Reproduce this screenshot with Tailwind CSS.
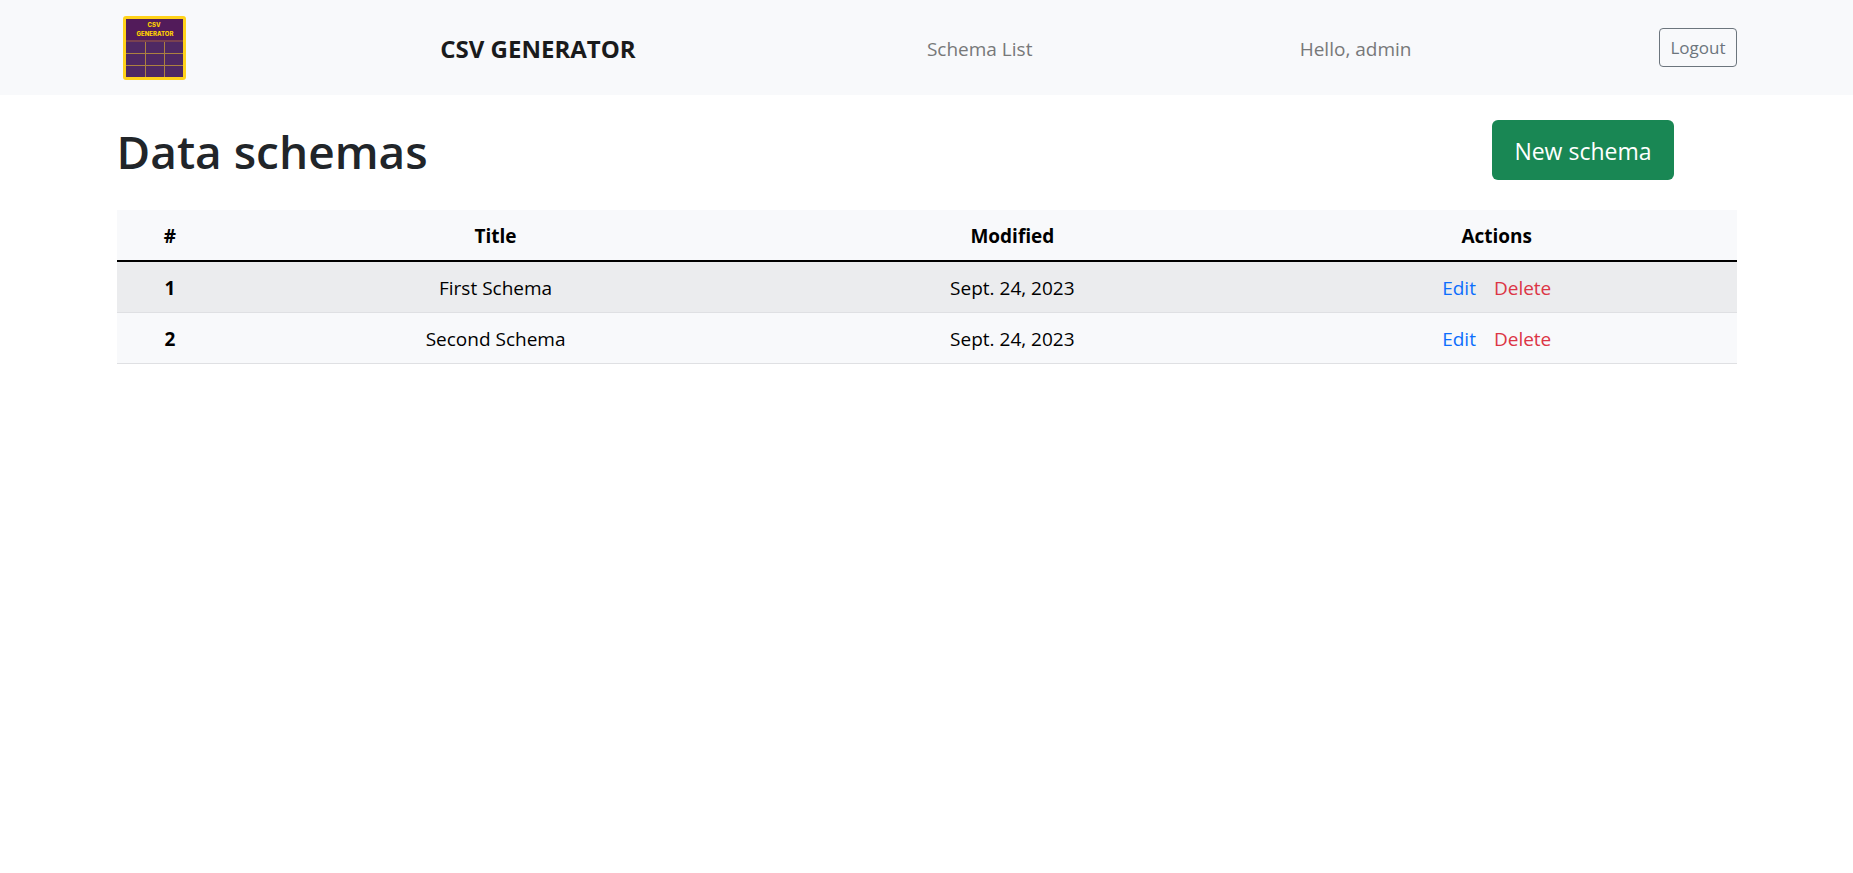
<!DOCTYPE html>
<html lang="en">
<head>
<meta charset="utf-8">
<meta name="viewport" content="width=device-width, initial-scale=1">
<title>CSV Generator</title>
<script src="https://cdn.jsdelivr.net/npm/@tailwindcss/browser@4"></script>
</head>
<body class="bg-white text-[#212529] text-[19px] leading-[30px] font-['Open_Sans','Noto_Sans',sans-serif]">
<header class="bg-[#f8f9fb]">
  <nav class="mx-auto w-7/8 max-w-[1620px] min-h-[95px] grid grid-cols-[324fr_487fr_373fr_360fr_auto] items-center whitespace-nowrap text-[#777879]">
    <a href="#" aria-label="Home" class="block pl-[6px]">
      <svg class="block" width="63" height="64" viewBox="0 0 63 64" aria-hidden="true">
        <rect x="0" y="0" width="63" height="64" rx="3" fill="#ffd21a"/>
        <rect x="3" y="3" width="57" height="58" fill="#4f2963"/>
        <rect x="3" y="3" width="57" height="22" fill="#521b5a"/>
        <rect x="3" y="24" width="57" height="2" fill="#7a4150"/>
        <path d="M3 37.500H60M3 49.500H60M22.500 26V61M41.500 26V61" stroke="#ad8140" stroke-width="1" fill="none"/>
        <g fill="#ffd000" font-family="Inter, sans-serif" font-weight="800" font-size="6" text-anchor="middle">
          <text x="31" y="11">CSV</text>
          <text x="32" y="20">GENERATOR</text>
        </g>
      </svg>
    </a>
    <a href="#" class="pt-[2px] text-[24px] font-bold text-[#1a1b1c]">CSV GENERATOR</a>
    <a href="#" class="pt-[2px]">Schema List</a>
    <span class="pt-[2px]">Hello, admin</span>
    <button type="button" class="h-[39px] px-[10px] rounded-[4px] border border-[#6c757d] text-[17px] text-[#6c757d]">Logout</button>
  </nav>
</header>
<main class="mx-auto w-7/8 max-w-[1620px]">
  <div class="flex items-center justify-between pt-[25px] pb-[30px]">
    <h1 class="pt-[2px] text-[46px] leading-[58px] font-semibold">Data schemas</h1>
    <a href="#" class="mr-[63px] rounded-[6px] bg-[#198754] px-[22px] pt-[2px] text-[23px] leading-[58px] text-white">New schema</a>
  </div>
  <table class="w-full table-fixed border-separate border-spacing-0 text-center text-black">
    <colgroup><col class="w-[6.6%]"><col class="w-[33.6%]"><col class="w-[30.2%]"><col class="w-[29.6%]"></colgroup>
    <thead>
      <tr class="h-[52px] bg-[#f8f9fb] *:border-b-2 *:border-black *:pt-[2px] *:font-bold">
        <th scope="col">#</th><th scope="col">Title</th><th scope="col">Modified</th><th scope="col">Actions</th>
      </tr>
    </thead>
    <tbody>
      <tr class="h-[51px] bg-[#ebecee] *:border-b *:border-[#dfe0e3] *:pt-[2px]">
        <th scope="row" class="font-bold">1</th><td>First Schema</td><td>Sept. 24, 2023</td>
        <td><a href="#" class="mr-[18px] text-[#0d6efd]">Edit</a><a href="#" class="text-[#dc3545]">Delete</a></td>
      </tr>
      <tr class="h-[51px] bg-[#f8f9fb] *:border-b *:border-[#dfe0e3] *:pt-[2px]">
        <th scope="row" class="font-bold">2</th><td>Second Schema</td><td>Sept. 24, 2023</td>
        <td><a href="#" class="mr-[18px] text-[#0d6efd]">Edit</a><a href="#" class="text-[#dc3545]">Delete</a></td>
      </tr>
    </tbody>
  </table>
</main>
</body>
</html>
